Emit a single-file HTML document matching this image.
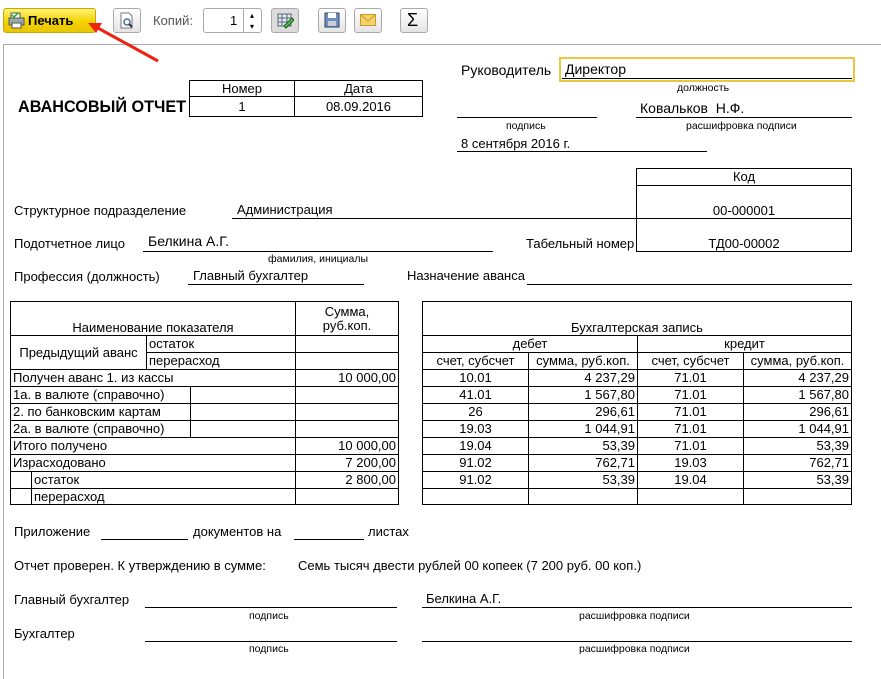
<!DOCTYPE html>
<html><head><meta charset="utf-8"><style>
*{margin:0;padding:0;box-sizing:border-box}
body{width:881px;height:679px;background:#fff;position:relative;overflow:hidden;font-family:"Liberation Sans",Arial,sans-serif;font-size:13px;color:#000}
.a{position:absolute;white-space:nowrap;line-height:15px}
.s{font-size:10.5px;line-height:11px}
.l{position:absolute;height:1px;background:#000}
.btn{position:absolute;border:1px solid #aaa;border-radius:3px;background:linear-gradient(#fff,#e4e4e4)}
table{position:absolute;border-collapse:collapse;table-layout:fixed}
td{border:1px solid #000;padding:0 2px;line-height:14px;white-space:nowrap;font-size:13px;overflow:hidden}
.r{text-align:right}.c{text-align:center}
</style></head><body>
<!-- toolbar -->
<div style="position:absolute;left:3px;top:8px;width:93px;height:25px;border:1px solid #c9a800;border-radius:3px;background:linear-gradient(#fff27a,#f3d300 55%,#e8c500)"></div>
<svg style="position:absolute;left:8px;top:12px" width="18" height="17" viewBox="0 0 18 17"><rect x="3" y="1" width="9" height="6" fill="#fff" stroke="#555"/><rect x="1" y="6" width="15" height="7" fill="#9aa" stroke="#555"/><rect x="4" y="11" width="9" height="5" fill="#fff" stroke="#555"/><path d="M4 3l2 2 4-4" stroke="#2a2" stroke-width="1.5" fill="none"/></svg>
<div class="a" style="left:28px;top:13px;font-weight:bold;font-size:13px">Печать</div>
<div class="btn" style="left:113px;top:8px;width:28px;height:25px"></div>
<svg style="position:absolute;left:119px;top:12px" width="16" height="17"><path d="M2 1h8l3 3v12H2z" fill="#fff" stroke="#777"/><circle cx="8" cy="10" r="3" fill="none" stroke="#4a6fa5" stroke-width="1.5"/><path d="M10 12l3 3" stroke="#333" stroke-width="2"/></svg>
<div class="a" style="left:153px;top:13px;color:#555">Копий:</div>
<div style="position:absolute;left:203px;top:8px;width:59px;height:25px;border:1px solid #aaa;border-radius:3px;background:#fff"></div>
<div style="position:absolute;left:243px;top:8px;width:1px;height:25px;background:#aaa"></div>
<div class="a" style="left:230px;top:13px">1</div>
<div class="a" style="left:250px;top:8px;font-size:8px">▴</div>
<div class="a" style="left:250px;top:19px;font-size:8px">▾</div>
<div class="btn" style="left:271px;top:8px;width:28px;height:25px;background:#dcdcdc"></div>
<svg style="position:absolute;left:277px;top:12px" width="17" height="17"><rect x="1" y="2" width="13" height="12" fill="#dfe8f0" stroke="#567"/><path d="M1 6h13M1 10h13M5 2v12M10 2v12" stroke="#567"/><path d="M7 14l8-8 2 2-8 8z" fill="#4c4" stroke="#252"/></svg>
<div class="btn" style="left:318px;top:8px;width:28px;height:25px"></div>
<svg style="position:absolute;left:324px;top:12px" width="16" height="16"><rect x="1" y="1" width="14" height="14" fill="#6b8fbf" stroke="#345"/><rect x="4" y="1" width="8" height="5" fill="#fff"/><rect x="4" y="9" width="8" height="5" fill="#ccd"/></svg>
<div class="btn" style="left:354px;top:8px;width:28px;height:25px"></div>
<svg style="position:absolute;left:360px;top:14px" width="16" height="12"><rect x="0.5" y="0.5" width="15" height="11" fill="#f6d36a" stroke="#c89a2a"/><path d="M1 1l7 6 7-6" stroke="#c89a2a" fill="none"/></svg>
<div class="btn" style="left:400px;top:8px;width:28px;height:25px"></div>
<div class="a" style="left:407px;top:10px;font-size:18px;line-height:20px">Σ</div>
<!-- page frame -->
<div style="position:absolute;left:3px;top:44px;width:878px;height:1px;background:#aaa"></div>
<div style="position:absolute;left:3px;top:44px;width:1px;height:635px;background:#aaa"></div>
<!-- arrow -->
<svg style="position:absolute;left:0;top:0" width="200" height="80"><path d="M158 61L96 27" stroke="#e21" stroke-width="3"/><path d="M88 23l14 0-6 10z" fill="#e21"/></svg>

<!-- header -->
<div class="a" style="left:18px;top:98px;font-weight:bold;font-size:16.2px;line-height:18px">АВАНСОВЫЙ ОТЧЕТ</div>
<table style="left:189px;top:80px;width:234px">
<colgroup><col style="width:105px"><col></colgroup>
<tr style="height:16px"><td class="c">Номер</td><td class="c">Дата</td></tr>
<tr style="height:20px"><td class="c">1</td><td class="c">08.09.2016</td></tr></table>

<div class="a" style="left:461px;top:63px;font-size:14px">Руководитель</div>
<div style="position:absolute;left:559px;top:57px;width:296px;height:25px;border:2px solid #e8c840"></div>
<div class="a" style="left:565px;top:62px;font-size:14px">Директор</div>
<div class="l" style="left:562px;top:78px;width:290px"></div>
<div class="a s" style="left:677px;top:83px">должность</div>
<div class="l" style="left:457px;top:117px;width:140px"></div>
<div class="a s" style="left:506px;top:121px">подпись</div>
<div class="a" style="left:640px;top:101px;font-size:14px">Ковальков&nbsp; Н.Ф.</div>
<div class="l" style="left:636px;top:117px;width:216px"></div>
<div class="a s" style="left:686px;top:121px">расшифровка подписи</div>
<div class="a" style="left:461px;top:136px">8 сентября 2016 г.</div>
<div class="l" style="left:457px;top:151px;width:250px"></div>

<table style="left:636px;top:168px;width:216px">
<tr style="height:17px"><td class="c">Код</td></tr>
<tr style="height:33px"><td class="c" style="vertical-align:bottom">00-000001</td></tr>
<tr style="height:33px"><td class="c" style="vertical-align:bottom">ТД00-00002</td></tr></table>

<div class="a" style="left:14px;top:203px">Структурное подразделение</div>
<div class="a" style="left:237px;top:202px">Администрация</div>
<div class="l" style="left:232px;top:218px;width:404px"></div>
<div class="a" style="left:14px;top:236px">Подотчетное лицо</div>
<div class="a" style="left:148px;top:234px;font-size:14px">Белкина А.Г.</div>
<div class="l" style="left:143px;top:251px;width:350px"></div>
<div class="a s" style="left:268px;top:254px">фамилия, инициалы</div>
<div class="a" style="left:526px;top:236px">Табельный номер</div>
<div class="a" style="left:14px;top:269px">Профессия (должность)</div>
<div class="a" style="left:193px;top:268px">Главный бухгалтер</div>
<div class="l" style="left:188px;top:284px;width:176px"></div>
<div class="a" style="left:407px;top:268px">Назначение аванса</div>
<div class="l" style="left:527px;top:284px;width:325px"></div>

<!-- left table -->
<table style="left:10px;top:301px;width:388px">
<colgroup><col style="width:21px"><col style="width:115px"><col style="width:44px"><col style="width:105px"><col style="width:103px"></colgroup>
<tr style="height:34px"><td colspan="4" class="c" style="vertical-align:bottom">Наименование показателя</td><td class="c">Сумма,<br>руб.коп.</td></tr>
<tr style="height:17px"><td colspan="2" rowspan="2" class="c">Предыдущий аванс</td><td colspan="2">остаток</td><td></td></tr>
<tr style="height:17px"><td colspan="2">перерасход</td><td></td></tr>
<tr style="height:17px"><td colspan="4">Получен аванс 1. из кассы</td><td class="r">10 000,00</td></tr>
<tr style="height:17px"><td colspan="3">1а. в валюте (справочно)</td><td></td><td></td></tr>
<tr style="height:17px"><td colspan="3">2. по банковским картам</td><td></td><td></td></tr>
<tr style="height:17px"><td colspan="3">2а. в валюте (справочно)</td><td></td><td></td></tr>
<tr style="height:17px"><td colspan="4">Итого получено</td><td class="r">10 000,00</td></tr>
<tr style="height:17px"><td colspan="4">Израсходовано</td><td class="r">7 200,00</td></tr>
<tr style="height:17px"><td></td><td colspan="3">остаток</td><td class="r">2 800,00</td></tr>
<tr style="height:16px"><td></td><td colspan="3">перерасход</td><td></td></tr>
</table>

<!-- right table -->
<table style="left:422px;top:301px;width:430px">
<colgroup><col style="width:106px"><col style="width:109px"><col style="width:106px"><col></colgroup>
<tr style="height:34px"><td colspan="4" class="c" style="vertical-align:bottom">Бухгалтерская запись</td></tr>
<tr style="height:17px"><td colspan="2" class="c">дебет</td><td colspan="2" class="c">кредит</td></tr>
<tr style="height:17px"><td class="c">счет, субсчет</td><td class="c">сумма, руб.коп.</td><td class="c">счет, субсчет</td><td class="c">сумма, руб.коп.</td></tr>
<tr style="height:17px"><td class="c">10.01</td><td class="r">4 237,29</td><td class="c">71.01</td><td class="r">4 237,29</td></tr>
<tr style="height:17px"><td class="c">41.01</td><td class="r">1 567,80</td><td class="c">71.01</td><td class="r">1 567,80</td></tr>
<tr style="height:17px"><td class="c">26</td><td class="r">296,61</td><td class="c">71.01</td><td class="r">296,61</td></tr>
<tr style="height:17px"><td class="c">19.03</td><td class="r">1 044,91</td><td class="c">71.01</td><td class="r">1 044,91</td></tr>
<tr style="height:17px"><td class="c">19.04</td><td class="r">53,39</td><td class="c">71.01</td><td class="r">53,39</td></tr>
<tr style="height:17px"><td class="c">91.02</td><td class="r">762,71</td><td class="c">19.03</td><td class="r">762,71</td></tr>
<tr style="height:17px"><td class="c">91.02</td><td class="r">53,39</td><td class="c">19.04</td><td class="r">53,39</td></tr>
<tr style="height:16px"><td></td><td></td><td></td><td></td></tr>
</table>

<!-- bottom -->
<div class="a" style="left:14px;top:524px">Приложение</div>
<div class="l" style="left:101px;top:539px;width:87px"></div>
<div class="a" style="left:193px;top:524px">документов на</div>
<div class="l" style="left:294px;top:539px;width:70px"></div>
<div class="a" style="left:368px;top:524px">листах</div>
<div class="a" style="left:14px;top:558px">Отчет проверен. К утверждению в сумме:</div>
<div class="a" style="left:298px;top:558px">Семь тысяч двести рублей 00 копеек (7 200 руб. 00 коп.)</div>
<div class="a" style="left:14px;top:592px">Главный бухгалтер</div>
<div class="l" style="left:145px;top:607px;width:252px"></div>
<div class="a s" style="left:249px;top:611px">подпись</div>
<div class="a" style="left:426px;top:591px">Белкина А.Г.</div>
<div class="l" style="left:422px;top:607px;width:430px"></div>
<div class="a s" style="left:579px;top:611px">расшифровка подписи</div>
<div class="a" style="left:14px;top:626px">Бухгалтер</div>
<div class="l" style="left:145px;top:641px;width:252px"></div>
<div class="a s" style="left:249px;top:644px">подпись</div>
<div class="l" style="left:422px;top:641px;width:430px"></div>
<div class="a s" style="left:579px;top:644px">расшифровка подписи</div>
</body></html>
